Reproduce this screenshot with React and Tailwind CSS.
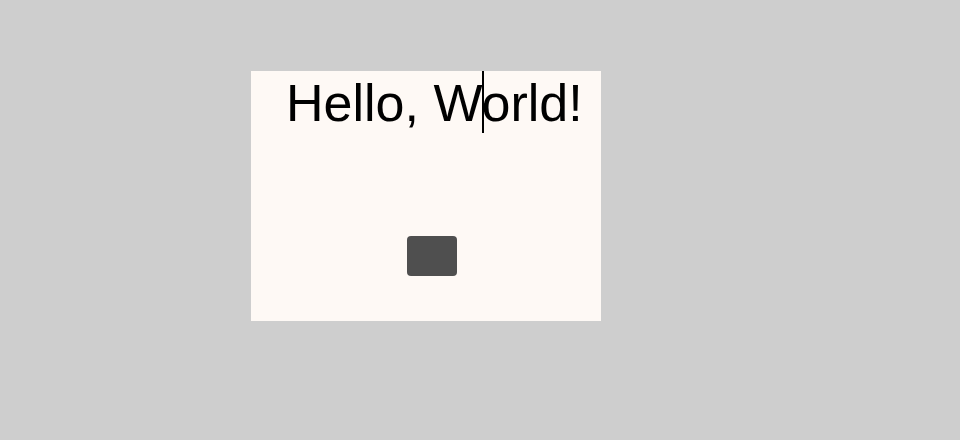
export default function App() {
  return (
    <div className="w-[960px] h-[440px] bg-[#cecece] pt-[71px] pl-[251px]">
      <div className="w-[350px] h-[250px] bg-[#fef9f5] flex flex-col">
        <div className="relative h-[62px] pl-[35px] pt-[3px]">
          <span className="text-[52px] leading-[58px] text-black font-['Liberation_Sans',Arial,sans-serif] whitespace-nowrap">
            Hello, World!
          </span>
          <span className="absolute left-[231px] top-0 w-[2px] h-[62px] bg-black" />
        </div>
        <div className="flex justify-center pl-[12px] mt-[103px]">
          <button className="w-[50px] h-[40px] rounded-[4px] bg-[#4f4f4f]" />
        </div>
      </div>
    </div>
  );
}
